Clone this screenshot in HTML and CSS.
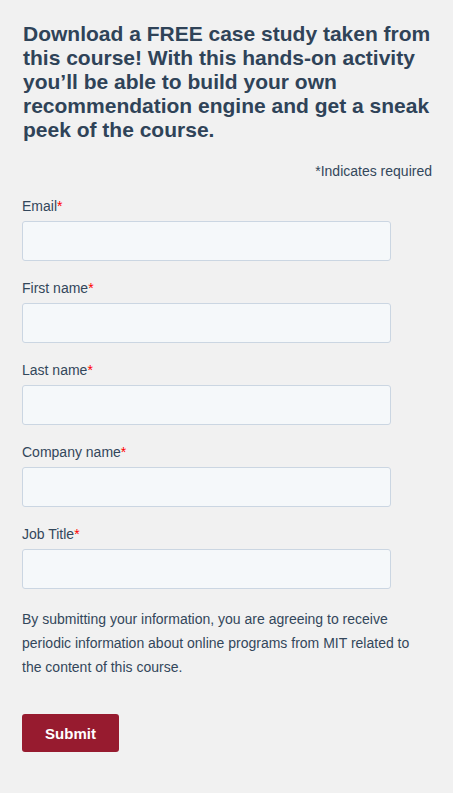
FILE: index.html
```html
<!DOCTYPE html>
<html>
<head>
<meta charset="utf-8">
<link rel="stylesheet" href="styles.css">
</head>
<body>
<div class="page">
  <h2 class="title">Download a FREE case study taken from this course! With this hands-on activity you’ll be able to build your own recommendation engine and get a sneak peek of the course.</h2>
  <div class="required-note">*Indicates required</div>
  <form class="form">
    <div class="field">
      <label class="label">Email<span class="star">*</span></label>
      <input class="input" type="text">
    </div>
    <div class="field">
      <label class="label">First name<span class="star">*</span></label>
      <input class="input" type="text">
    </div>
    <div class="field">
      <label class="label">Last name<span class="star">*</span></label>
      <input class="input" type="text">
    </div>
    <div class="field">
      <label class="label">Company name<span class="star">*</span></label>
      <input class="input" type="text">
    </div>
    <div class="field">
      <label class="label">Job Title<span class="star">*</span></label>
      <input class="input" type="text">
    </div>
    <p class="disclaimer">By submitting your information, you are agreeing to receive periodic information about online programs from MIT related to the content of this course.</p>
    <button class="submit" type="button">Submit</button>
  </form>
</div>
</body>
</html>
```
FILE: styles.css
```css
html, body {
  margin: 0;
  padding: 0;
  background: #f1f1f1;
}
body {
  font-family: "Liberation Sans", Arial, sans-serif;
  color: #33475b;
}
.page {
  padding: 22px 21px 40px 22px;
}
.title {
  margin: 0;
  font-size: 21px;
  line-height: 24px;
  font-weight: bold;
  color: #2f4358;
  padding-left: 1px;
}
.required-note {
  text-align: right;
  font-size: 14px;
  line-height: 18px;
  margin-top: 20px;
}
.form {
  display: flex;
  flex-direction: column;
  margin-top: 17px;
}
.field {
  display: flex;
  flex-direction: column;
  margin-bottom: 18px;
}
.label {
  font-size: 14px;
  line-height: 18px;
  margin-bottom: 6px;
}
.star {
  color: #f00;
}
.input {
  box-sizing: border-box;
  width: 369px;
  height: 40px;
  background: #f5f8fa;
  border: 1px solid #cbd6e2;
  border-radius: 3px;
  margin: 0;
  padding: 0 10px;
}
.disclaimer {
  margin: 0;
  font-size: 14px;
  line-height: 24px;
  width: 410px;
}
.submit {
  align-self: flex-start;
  margin-top: 35px;
  width: 97px;
  height: 38px;
  background: #971b2f;
  color: #fff;
  border: none;
  border-radius: 3px;
  font-family: "Liberation Sans", Arial, sans-serif;
  font-size: 15px;
  font-weight: bold;
}
```
